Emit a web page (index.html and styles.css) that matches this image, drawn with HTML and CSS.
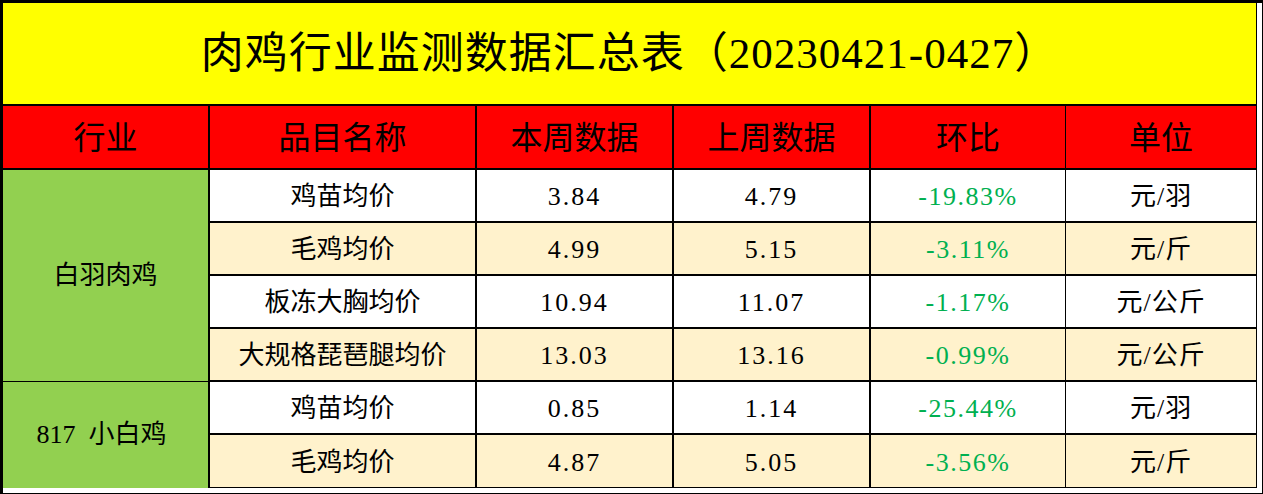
FILE: index.html
```html
<!DOCTYPE html>
<html lang="zh-CN">
<head>
<meta charset="utf-8">
<title>肉鸡行业监测数据汇总表</title>
<link rel="stylesheet" href="styles.css">
</head>
<body>
<div class="frame">
  <table class="sheet">
    <colgroup>
      <col class="w1"><col class="w2"><col class="w3"><col class="w4"><col class="w5"><col class="w6">
    </colgroup>
    <tr class="title-row">
      <td colspan="6" class="title c6">肉鸡行业监测数据汇总表（20230421-0427）</td>
    </tr>
    <tr class="head">
      <th>行业</th><th>品目名称</th><th>本周数据</th><th>上周数据</th><th class="c5">环比</th><th class="c6">单位</th>
    </tr>
    <tr class="row">
      <td rowspan="4" class="ind ind-a">白羽肉鸡</td>
      <td class="name">鸡苗均价</td><td class="num">3.84</td><td class="num">4.79</td><td class="pct c5">-19.83%</td><td class="unit c6">元/羽</td>
    </tr>
    <tr class="row alt">
      <td class="name">毛鸡均价</td><td class="num">4.99</td><td class="num">5.15</td><td class="pct c5">-3.11%</td><td class="unit c6">元/斤</td>
    </tr>
    <tr class="row">
      <td class="name">板冻大胸均价</td><td class="num">10.94</td><td class="num">11.07</td><td class="pct c5">-1.17%</td><td class="unit c6">元/公斤</td>
    </tr>
    <tr class="row alt">
      <td class="name">大规格琵琶腿均价</td><td class="num">13.03</td><td class="num">13.16</td><td class="pct c5">-0.99%</td><td class="unit c6">元/公斤</td>
    </tr>
    <tr class="row">
      <td rowspan="2" class="ind ind-b">817&nbsp;&nbsp;小白鸡</td>
      <td class="name">鸡苗均价</td><td class="num">0.85</td><td class="num">1.14</td><td class="pct c5">-25.44%</td><td class="unit c6">元/羽</td>
    </tr>
    <tr class="row alt last">
      <td class="name">毛鸡均价</td><td class="num">4.87</td><td class="num">5.05</td><td class="pct c5">-3.56%</td><td class="unit c6">元/斤</td>
    </tr>
  </table>
</div>
</body>
</html>
```

FILE: styles.css
```css
html, body {
  margin: 0;
  padding: 0;
  background: #ffffff;
}

.frame {
  width: 1263px;
  height: 494px;
  box-sizing: border-box;
  border-style: solid;
  border-color: #000000;
  border-width: 3px 1px 1px 3px;
  overflow: hidden;
}

.sheet {
  border-collapse: separate;
  border-spacing: 0;
  table-layout: fixed;
  width: 1254px;
  font-family: "Liberation Serif", "Noto Sans CJK SC", serif;
  color: #000000;
}

.w1 { width: 207px; }
.w2 { width: 267px; }
.w3 { width: 197px; }
.w4 { width: 197px; }
.w5 { width: 195px; }
.w6 { width: 191px; }

.sheet td,
.sheet th {
  box-sizing: border-box;
  padding: 0;
  text-align: center;
  vertical-align: middle;
  border-right: 2px solid #000000;
  border-bottom: 2px solid #000000;
  white-space: nowrap;
  line-height: 1;
}

.sheet .c5,
.sheet .c6 {
  border-right-width: 1px;
}

.title {
  height: 103px;
  background: #ffff00;
  font-size: 43px;
  letter-spacing: 1px;
}

.head th {
  height: 64px;
  padding-top: 1px;
  background: #ff0000;
  font-size: 32px;
  font-weight: normal;
}

.row td {
  height: 53px;
  padding-top: 3px;
  font-size: 26px;
  background: #ffffff;
}

.row.alt td {
  background: #fff2cc;
}

.row.last td {
  border-bottom-width: 1px;
}

.sheet .ind {
  background: #92d050;
  padding-top: 0;
}

.sheet .ind-a {
  border-bottom-width: 1px;
}

.sheet .ind-b {
  border-bottom-width: 0;
  white-space: pre;
  padding-right: 8px;
}

.num {
  letter-spacing: 2px;
}

.pct {
  color: #00b050;
  letter-spacing: 1.5px;
}

.unit {
  letter-spacing: 1px;
}
```
